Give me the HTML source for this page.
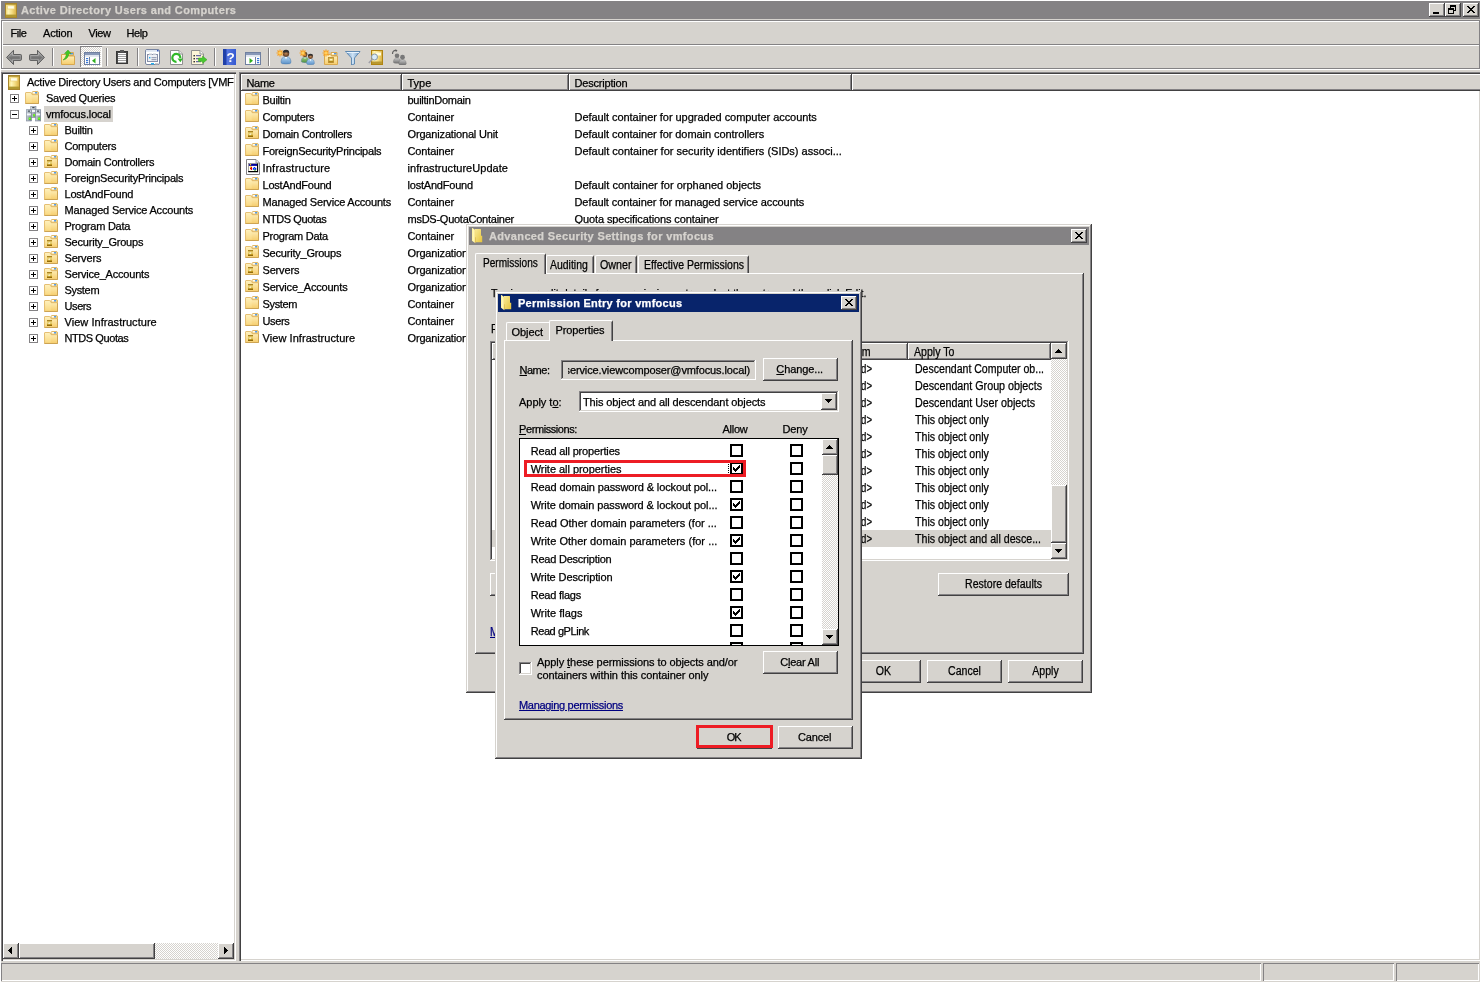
<!DOCTYPE html>
<html><head><meta charset="utf-8"><title>Active Directory Users and Computers</title>
<style>
html,body{margin:0;padding:0;}
body{width:1480px;height:982px;overflow:hidden;background:#d6d3ce;position:relative;font-family:"Liberation Sans",sans-serif;font-size:11px;color:#000;}
div,span,svg{position:absolute;box-sizing:border-box;}
.t{white-space:nowrap;line-height:13px;font-size:11px;-webkit-text-stroke:0.25px currentColor;}
.b{font-weight:bold;}
.ms{font-size:12px;line-height:14px;transform:scaleX(.88);transform-origin:0 0;}
.raised{background:#d6d3ce;box-shadow:inset -1px -1px #424142,inset 1px 1px #fff,inset -2px -2px #848284,inset 2px 2px #d6d3ce;}
.sunken{background:#fff;box-shadow:inset -1px -1px #fff,inset 1px 1px #848284,inset -2px -2px #d6d3ce,inset 2px 2px #424142;}
.win{background:#d6d3ce;box-shadow:inset -1px -1px #424142,inset 1px 1px #d6d3ce,inset -2px -2px #848284,inset 2px 2px #fff;}
.hdr{background:#d6d3ce;box-shadow:inset -1px -1px #424142,inset 1px 1px #fff,inset -2px -2px #848284;}
.tabpage{background:#d6d3ce;box-shadow:inset -1px -1px #424142,inset 1px 1px #fff,inset -2px -2px #848284;}
.tab{background:#d6d3ce;border-top:1px solid #fff;border-left:1px solid #fff;border-right:1px solid #424142;border-radius:2px 2px 0 0;}
.tab:after{content:"";position:absolute;right:0;top:1px;bottom:0;width:1px;background:#848284;}
.chk{background:repeating-conic-gradient(#fff 0% 25%,#d6d3ce 0% 50%) 0 0/2px 2px;}
.cb{background:#fff;border:2px solid #000;}
.u{text-decoration:underline;}
</style></head><body><div id="root" style="left:0;top:0;width:1480px;height:982px;will-change:transform">

<svg width="0" height="0" style="left:0;top:0"><defs>
<linearGradient id="gF" x1="0" y1="0" x2="0" y2="1"><stop offset="0" stop-color="#fff3c4"/><stop offset="1" stop-color="#f6cd6c"/></linearGradient>
<linearGradient id="gB" x1="0" y1="0" x2="1" y2="0"><stop offset="0" stop-color="#f0d468"/><stop offset=".25" stop-color="#fff6b8"/><stop offset=".6" stop-color="#f4dc80"/><stop offset="1" stop-color="#d8ae40"/></linearGradient>
<linearGradient id="gS" x1="0" y1="0" x2="1" y2="0"><stop offset="0" stop-color="#c8d0d8"/><stop offset="1" stop-color="#7e8896"/></linearGradient>
<linearGradient id="gA" x1="0" y1="0" x2="0" y2="1"><stop offset="0" stop-color="#b8b8b8"/><stop offset=".55" stop-color="#707070"/><stop offset="1" stop-color="#a8a8a8"/></linearGradient>
<linearGradient id="gH" x1="0" y1="0" x2="1" y2="0"><stop offset="0" stop-color="#2040a8"/><stop offset=".25" stop-color="#2848c0"/><stop offset=".3" stop-color="#5878e0"/><stop offset="1" stop-color="#3458d0"/></linearGradient>
<linearGradient id="gFu" x1="0" y1="0" x2="1" y2="0"><stop offset="0" stop-color="#5f8fc0"/><stop offset=".5" stop-color="#cfe4f6"/><stop offset="1" stop-color="#5f8fc0"/></linearGradient>
<linearGradient id="gU" x1="0" y1="0" x2="0" y2="1"><stop offset="0" stop-color="#b4d8f4"/><stop offset="1" stop-color="#5a90c8"/></linearGradient>
<linearGradient id="gG" x1="0" y1="0" x2="0" y2="1"><stop offset="0" stop-color="#a0d088"/><stop offset="1" stop-color="#509040"/></linearGradient>
<linearGradient id="gGr" x1="0" y1="0" x2="0" y2="1"><stop offset="0" stop-color="#c8c8c8"/><stop offset="1" stop-color="#707070"/></linearGradient>
<linearGradient id="gOU" x1="0" y1="0" x2="0" y2="1"><stop offset="0" stop-color="#c8a030"/><stop offset=".5" stop-color="#ecd880"/><stop offset=".75" stop-color="#c09820"/><stop offset="1" stop-color="#7a5200"/></linearGradient>
<radialGradient id="gHd"><stop offset="0" stop-color="#c08858"/><stop offset="1" stop-color="#5a3820"/></radialGradient>
</defs></svg>
<div class="" style="left:0px;top:0px;width:1480px;height:1px;background:#fff"></div>
<div class="" style="left:0px;top:0px;width:1px;height:982px;background:#fff"></div>
<div class="" style="left:1px;top:1px;width:1479px;height:18px;background:#848284"></div>
<svg style="left:5px;top:3px" width="16" height="16" viewBox="0 0 16 16"><rect x=".5" y=".5" width="11" height="14" fill="url(#gB)" stroke="#a8862c"/>
<rect x="1" y="11.6" width="10" height="2.4" fill="#b09830"/>
<rect x="1" y="1" width="10" height=".9" fill="#b89c38"/>
<rect x="2.6" y="2.8" width="6.6" height="3.2" fill="#fffee6" stroke="#ecd27a" stroke-width=".7"/></svg>
<span class="t b" style="left:21px;top:4px;letter-spacing:0.377px;color:#d6d3ce;">Active Directory Users and Computers</span>
<div class="raised" style="left:1429px;top:3px;width:16px;height:14px;"></div>
<svg style="left:1433px;top:12px" width="6" height="2" viewBox="0 0 6 2" shape-rendering="crispEdges"><path d="M0 0h6v1h-6zM0 1h6v1h-6z" fill="#000"/></svg>
<div class="raised" style="left:1445px;top:3px;width:16px;height:14px;"></div>
<svg style="left:1448px;top:5px" width="8" height="9" viewBox="0 0 8 9" shape-rendering="crispEdges"><path d="M2 0h6v1h-6zM2 1h6v1h-6zM2 2h1v1h-1zM7 2h1v1h-1zM0 3h6v1h-6zM7 3h1v1h-1zM0 4h6v1h-6zM7 4h1v1h-1zM0 5h1v1h-1zM5 5h3v1h-3zM0 6h1v1h-1zM5 6h1v1h-1zM0 7h1v1h-1zM5 7h1v1h-1zM0 8h6v1h-6z" fill="#000"/></svg>
<div class="raised" style="left:1463px;top:3px;width:16px;height:14px;"></div>
<svg style="left:1467px;top:6px" width="8" height="7" viewBox="0 0 8 7" shape-rendering="crispEdges"><path d="M0 0h2v1h-2zM6 0h2v1h-2zM1 1h2v1h-2zM5 1h2v1h-2zM2 2h4v1h-4zM3 3h2v1h-2zM2 4h4v1h-4zM1 5h2v1h-2zM5 5h2v1h-2zM0 6h2v1h-2zM6 6h2v1h-2z" fill="#000"/></svg>
<div class="" style="left:1px;top:20px;width:1479px;height:1px;background:#848284"></div>
<div class="" style="left:1px;top:20px;width:1px;height:49px;background:#848284"></div>
<div class="" style="left:1479px;top:20px;width:1px;height:49px;background:#848284"></div>
<div class="" style="left:2px;top:21px;width:1477px;height:1px;background:#fff"></div>
<div class="" style="left:2px;top:21px;width:1px;height:47px;background:#fff"></div>
<span class="t" style="left:10.5px;top:27px;letter-spacing:-0.455px;">File</span>
<span class="t" style="left:43px;top:27px;letter-spacing:-0.199px;">Action</span>
<span class="t" style="left:88.5px;top:27px;letter-spacing:-0.435px;">View</span>
<span class="t" style="left:126.5px;top:27px;letter-spacing:-0.456px;">Help</span>
<div class="" style="left:3px;top:44px;width:1476px;height:1px;background:#848284"></div>
<div class="" style="left:3px;top:45px;width:1476px;height:1px;background:#fff"></div>
<div class="" style="left:1px;top:68px;width:1479px;height:1px;background:#848284"></div>
<div class="" style="left:1px;top:69px;width:1479px;height:1px;background:#fff"></div>
<div class="" style="left:52px;top:48px;width:1px;height:18px;background:#848284"></div>
<div class="" style="left:53px;top:48px;width:1px;height:18px;background:#fff"></div>
<div class="" style="left:106px;top:48px;width:1px;height:18px;background:#848284"></div>
<div class="" style="left:107px;top:48px;width:1px;height:18px;background:#fff"></div>
<div class="" style="left:137px;top:48px;width:1px;height:18px;background:#848284"></div>
<div class="" style="left:138px;top:48px;width:1px;height:18px;background:#fff"></div>
<div class="" style="left:214px;top:48px;width:1px;height:18px;background:#848284"></div>
<div class="" style="left:215px;top:48px;width:1px;height:18px;background:#fff"></div>
<div class="" style="left:268px;top:48px;width:1px;height:18px;background:#848284"></div>
<div class="" style="left:269px;top:48px;width:1px;height:18px;background:#fff"></div>
<svg style="left:6px;top:49px" width="16" height="16" viewBox="0 0 16 16"><path d="M.6 8.4L7.5 1.3V5.5H14.6Q15.4 5.5 15.4 6.3V10.6Q15.4 11.4 14.6 11.4H7.5V15.5Z" fill="url(#gA)" stroke="#5c5c5c" stroke-width="1"/><path d="M2 8.4L6.6 3.7V6.5H14.3V10.4H6.6V13.1Z" fill="none" stroke="#d0d0d0" stroke-width=".5" opacity=".8"/></svg>
<svg style="left:29px;top:49px" width="16" height="16" viewBox="0 0 16 16"><path d="M15.4 8.4L8.5 1.3V5.5H1.4Q.6 5.5 .6 6.3V10.6Q.6 11.4 1.4 11.4H8.5V15.5Z" fill="url(#gA)" stroke="#5c5c5c" stroke-width="1"/><path d="M14 8.4L9.4 3.7V6.5H1.7V10.4H9.4V13.1Z" fill="none" stroke="#d0d0d0" stroke-width=".5" opacity=".8"/></svg>
<svg style="left:60px;top:49px" width="16" height="16" viewBox="0 0 16 16"><path d="M8 3.5h5.5v3h-5.5z" fill="#f4d282" stroke="#d8a850"/><rect x="10" y="4" width="3" height="1.4" fill="#4a98f0"/>
<path d="M1.5 5.5h6l1 1.5h6v8.5h-13z" fill="url(#gF)" stroke="#d8a850"/>
<path d="M3 11C4.5 10 6 8 6.5 4.5H4.5L8 1L11 4.5H9C8.5 8 6.5 10.5 3 11Z" fill="#40c820" stroke="#30a018" stroke-width=".5"/></svg>
<div class="chk" style="left:80px;top:46px;width:22px;height:21px;box-shadow:inset 1px 1px #848284,inset -1px -1px #fff"></div>
<svg style="left:84px;top:51px" width="16" height="16" viewBox="0 0 16 16"><rect x=".5" y="1.5" width="15" height="12" fill="#fff" stroke="#7080a0"/><rect x="1" y="2" width="14" height="2.2" fill="#8898b8"/><rect x="1" y="4.2" width="14" height="1.6" fill="#dde4ee"/>
<path d="M5.5 6v7.5" stroke="#7080a0"/><rect x="2" y="7" width="2.2" height="1.2" fill="#3878d8"/><rect x="2" y="9" width="2.2" height="1.2" fill="#3878d8"/><rect x="2" y="11" width="2.2" height="1.2" fill="#3878d8"/>
<path d="M11.5 7v5.5L8 9.7z" fill="#30b020"/></svg>
<svg style="left:114px;top:49px" width="16" height="16" viewBox="0 0 16 16"><rect x="2.5" y="2.5" width="11" height="12" fill="#484848" stroke="#383838"/><rect x="6" y="1" width="4" height="2.4" fill="#585858"/>
<rect x="4" y="4" width="8" height="9.5" fill="#fff"/><path d="M4 5.5h8M4 7.5h8M4 9.5h8M4 11.5h8" stroke="#a0a0a0" stroke-width="1"/></svg>
<svg style="left:145px;top:49px" width="16" height="16" viewBox="0 0 16 16"><rect x=".5" y=".5" width="14" height="15" rx="1.5" fill="#fff" stroke="#7884a0"/><rect x="1" y="1" width="13" height="1.8" fill="#dfe6f2"/><rect x="12" y="1" width="1.6" height="1.4" fill="#3858b8"/>
<rect x="2.5" y="5.5" width="10" height="7" fill="#eef0f6" stroke="#8890a8"/><rect x="4" y="4.5" width="3" height="1.4" fill="#c8ccd8"/><rect x="8" y="4.5" width="3" height="1.4" fill="#c8ccd8"/>
<rect x="4" y="8" width="1.4" height="1.4" fill="#20b0f0"/><path d="M6.5 8.7h5M6.5 10.7h5" stroke="#8890a8"/>
<rect x="6" y="14" width="3" height="1.4" fill="#20b0f0"/><rect x="10" y="14" width="3" height="1.4" fill="#c8c8c8"/></svg>
<svg style="left:168px;top:49px" width="16" height="16" viewBox="0 0 16 16"><path d="M2.5 1.5H11L14.5 5V15.5H2.5Z" fill="#fff" stroke="#909090"/><path d="M11 1.5V5H14.5" fill="#e8e8e8" stroke="#909090"/>
<path d="M12.3 9A4 4 0 1 0 8.5 12.8" fill="none" stroke="#30b828" stroke-width="2.2"/><path d="M9.5 9.5H15L12.3 13.2Z" fill="#30b828"/></svg>
<svg style="left:191px;top:49px" width="16" height="16" viewBox="0 0 16 16"><path d="M.5 1.5H9L12.5 5V15.5H.5Z" fill="#fdf6d8" stroke="#909090"/><path d="M9 1.5V5H12.5" fill="#fff" stroke="#909090"/>
<rect x="2.5" y="6" width="1.4" height="1.4" fill="#202020"/><rect x="2.5" y="9" width="1.4" height="1.4" fill="#202020"/><rect x="2.5" y="12" width="1.4" height="1.4" fill="#202020"/>
<path d="M5 6.7h5M5 9.7h3M5 12.7h5" stroke="#6868a8" stroke-width="1.2"/>
<path d="M7.5 9H11.5V7L16 10.7L11.5 14.4V12.4H7.5Z" fill="#48c830" stroke="#38a020" stroke-width=".5"/></svg>
<svg style="left:222px;top:49px" width="16" height="16" viewBox="0 0 16 16"><rect x="1" y="0" width="13" height="16" fill="url(#gH)"/><rect x="1" y="0" width="3" height="16" fill="#2040a8"/>
<text x="8.6" y="13" font-family="Liberation Sans" font-weight="bold" font-size="13.5" fill="#fff" text-anchor="middle">?</text></svg>
<svg style="left:245px;top:51px" width="16" height="16" viewBox="0 0 16 16"><rect x=".5" y="1.5" width="15" height="12" fill="#fff" stroke="#7080a0"/><rect x="1" y="2" width="14" height="2.2" fill="#8898b8"/><rect x="1" y="4.2" width="14" height="1.6" fill="#dde4ee"/>
<path d="M10.5 6v7.5" stroke="#7080a0"/><rect x="12" y="7" width="2.2" height="1.2" fill="#3878d8"/><rect x="12" y="9" width="2.2" height="1.2" fill="#3878d8"/><rect x="12" y="11" width="2.2" height="1.2" fill="#3878d8"/>
<path d="M4.5 7v5.5L8 9.7z" fill="#30b020"/></svg>
<svg style="left:276px;top:49px" width="16" height="16" viewBox="0 0 16 16"><g transform="translate(10,5.5) scale(1)"><path d="M-5 8Q-5 2 0 2Q5 2 5 8Q5 9.5 0 9.5Q-5 9.5 -5 8Z" fill="url(#gU)" stroke="#4878a8" stroke-width=".5"/><path d="M-1 2.5L0 5L1 2.5Z" fill="#fff"/><circle cx="0" cy="-1" r="3.2" fill="url(#gHd)"/><path d="M-3.2 -1.5A3.2 3.2 0 0 1 3.2 -1.5Q1 -3 -3.2 -1.5Z" fill="#303030"/></g><g stroke="#f8a020" stroke-width="1.2"><path d="M4 .5v7M.5 4h7M1.5 1.5l5 5M6.5 1.5l-5 5"/></g><circle cx="4" cy="4" r="1.6" fill="#ffd060"/></svg>
<svg style="left:299px;top:49px" width="16" height="16" viewBox="0 0 16 16"><g transform="translate(6,6.5) scale(0.75)"><path d="M-5 8Q-5 2 0 2Q5 2 5 8Q5 9.5 0 9.5Q-5 9.5 -5 8Z" fill="url(#gG)" stroke="#4878a8" stroke-width=".5"/><path d="M-1 2.5L0 5L1 2.5Z" fill="#fff"/><circle cx="0" cy="-1" r="3.2" fill="url(#gHd)"/><path d="M-3.2 -1.5A3.2 3.2 0 0 1 3.2 -1.5Q1 -3 -3.2 -1.5Z" fill="#303030"/></g><g transform="translate(11.5,8.3) scale(0.78)"><path d="M-5 8Q-5 2 0 2Q5 2 5 8Q5 9.5 0 9.5Q-5 9.5 -5 8Z" fill="url(#gU)" stroke="#4878a8" stroke-width=".5"/><path d="M-1 2.5L0 5L1 2.5Z" fill="#fff"/><circle cx="0" cy="-1" r="3.2" fill="url(#gHd)"/><path d="M-3.2 -1.5A3.2 3.2 0 0 1 3.2 -1.5Q1 -3 -3.2 -1.5Z" fill="#303030"/></g><g stroke="#f8a020" stroke-width="1.2"><path d="M4 .5v7M.5 4h7M1.5 1.5l5 5M6.5 1.5l-5 5"/></g><circle cx="4" cy="4" r="1.6" fill="#ffd060"/></svg>
<svg style="left:322px;top:49px" width="16" height="16" viewBox="0 0 16 16"><path d="M9 3.5h6v3h-6z" fill="#f4d282" stroke="#d8a850"/><rect x="12" y="4" width="2.4" height="1.4" fill="#4a98f0"/><rect x="10" y="4" width="2" height="1.4" fill="#fff"/>
<path d="M2.5 5.5h6l1 1.5h6v8.5h-13z" fill="url(#gF)" stroke="#d8a850"/>
<rect x="6.5" y="8.5" width="5" height="5" fill="url(#gOU)" stroke="#b88a30" stroke-width=".8"/><rect x="8" y="10" width="2.2" height="1.4" fill="#fff4c8"/><g stroke="#f8a020" stroke-width="1.2"><path d="M4 .5v7M.5 4h7M1.5 1.5l5 5M6.5 1.5l-5 5"/></g><circle cx="4" cy="4" r="1.6" fill="#ffd060"/></svg>
<svg style="left:345px;top:49px" width="16" height="16" viewBox="0 0 16 16"><path d="M.5 2.5H15L9.5 9V15L6.5 16V9Z" fill="url(#gFu)" stroke="#4878a8" stroke-width=".8"/><path d="M1.5 3.5H14" stroke="#e8f4ff"/></svg>
<svg style="left:368px;top:49px" width="16" height="16" viewBox="0 0 16 16"><rect x="3.5" y="1.5" width="11" height="14" fill="url(#gB)" stroke="#b08410"/><rect x="4" y="12.5" width="10" height="2.5" fill="#b89830"/><rect x="8" y="3.5" width="5" height="3" fill="#fffde0"/>
<circle cx="6.5" cy="8" r="3" fill="#d8ecf8" stroke="#8898a8"/><path d="M4.3 10.3L.8 14" stroke="#a0a0a8" stroke-width="1.6"/></svg>
<svg style="left:391px;top:49px" width="16" height="16" viewBox="0 0 16 16"><g transform="translate(6,7.5) scale(0.72)"><path d="M-5 8Q-5 2 0 2Q5 2 5 8Q5 9.5 0 9.5Q-5 9.5 -5 8Z" fill="url(#gGr)" stroke="#707070" stroke-width=".5"/><circle cx="0" cy="-1" r="3.2" fill="#787878"/></g><g transform="translate(11.5,9) scale(0.75)"><path d="M-5 8Q-5 2 0 2Q5 2 5 8Q5 9.5 0 9.5Q-5 9.5 -5 8Z" fill="url(#gGr)" stroke="#707070" stroke-width=".5"/><circle cx="0" cy="-1" r="3.2" fill="#787878"/></g><path d="M1.5 5Q1.5 1 5.5 1.5" fill="none" stroke="#606060" stroke-width="1.2"/><path d="M4.5 .2L6.5 1.6L4.8 3.2Z" fill="#606060"/></svg>
<div class="" style="left:1px;top:72px;width:235px;height:889px;background:#fff;box-shadow:inset 1px 1px #848284,inset 2px 2px #424142,inset -1px -1px #fff,inset -2px -2px #d6d3ce;"></div>
<svg style="left:8px;top:75px" width="16" height="16" viewBox="0 0 16 16"><rect x=".5" y=".5" width="11" height="14" fill="url(#gB)" stroke="#a8862c"/>
<rect x="1" y="11.6" width="10" height="2.4" fill="#b09830"/>
<rect x="1" y="1" width="10" height=".9" fill="#b89c38"/>
<rect x="2.6" y="2.8" width="6.6" height="3.2" fill="#fffee6" stroke="#ecd27a" stroke-width=".7"/></svg>
<div style="left:3px;top:74px;width:231px;height:16px;overflow:hidden">
<span class="t" style="left:24px;top:2px;letter-spacing:-0.239px;">Active Directory Users and Computers [VMFOCUS]</span>
</div>
<div class="" style="left:10px;top:94px;width:9px;height:9px;border:1px solid #848284;background:#fff"></div>
<div class="" style="left:12px;top:98px;width:5px;height:1px;background:#000"></div>
<div class="" style="left:14px;top:96px;width:1px;height:5px;background:#000"></div>
<svg style="left:25px;top:90px" width="16" height="16" viewBox="0 0 16 16"><path d="M7 4.5V2.2L7.7 1.5H12.8L13.5 2.2V5Z" fill="#f6d88c" stroke="#dcb25e" stroke-width=".9"/>
<rect x="7.8" y="2.1" width="2.4" height="1.3" fill="#fff"/><rect x="10" y="2.1" width="2.2" height="1.3" rx=".5" fill="#4a98f0"/>
<path d="M.5 3Q.5 2.5 1 2.5H5.7L7.2 4.7H13.5V13.5H.5Z" fill="url(#gF)" stroke="#e2b968" stroke-width=".9"/>
<path d="M1.4 3.4H5.3L6.8 5.6V12.6H1.4Z" fill="#ffeeb0" opacity=".3"/>
<path d="M.5 13.5H13.5V5.2" fill="none" stroke="#c9a050" stroke-width=".9"/></svg>
<span class="t" style="left:46px;top:92px;letter-spacing:-0.274px;">Saved Queries</span>
<div class="" style="left:10px;top:110px;width:9px;height:9px;border:1px solid #848284;background:#fff"></div>
<div class="" style="left:12px;top:114px;width:5px;height:1px;background:#000"></div>
<svg style="left:26px;top:106px" width="16" height="16" viewBox="0 0 16 16"><g transform="translate(4.5,0)"><rect x=".3" y=".3" width="5.2" height="11.3" fill="url(#gS)" stroke="#7c8898" stroke-width=".6"/>
<rect x=".9" y=".8" width="4" height="1.9" fill="#dfe8f2"/><rect x="1.7" y="1.2" width="2.4" height="1" fill="#1c242c"/>
<rect x=".9" y="4" width="4" height="2" fill="#f2f6fa"/>
<rect x="2.7" y="8.1" width="2.3" height="2.4" fill="#40e418"/><rect x="3.2" y="8.4" width="1.2" height="1" fill="#b8f840"/></g><g transform="translate(0,3.4)"><rect x=".3" y=".3" width="5.2" height="11.3" fill="url(#gS)" stroke="#7c8898" stroke-width=".6"/>
<rect x=".9" y=".8" width="4" height="1.9" fill="#dfe8f2"/><rect x="1.7" y="1.2" width="2.4" height="1" fill="#1c242c"/>
<rect x=".9" y="4" width="4" height="2" fill="#f2f6fa"/>
<rect x="2.7" y="8.1" width="2.3" height="2.4" fill="#40e418"/><rect x="3.2" y="8.4" width="1.2" height="1" fill="#b8f840"/></g><g transform="translate(9.2,3.4)"><rect x=".3" y=".3" width="5.2" height="11.3" fill="url(#gS)" stroke="#7c8898" stroke-width=".6"/>
<rect x=".9" y=".8" width="4" height="1.9" fill="#dfe8f2"/><rect x="1.7" y="1.2" width="2.4" height="1" fill="#1c242c"/>
<rect x=".9" y="4" width="4" height="2" fill="#f2f6fa"/>
<rect x="2.7" y="8.1" width="2.3" height="2.4" fill="#40e418"/><rect x="3.2" y="8.4" width="1.2" height="1" fill="#b8f840"/></g></svg>
<div class="" style="left:44px;top:106px;width:69px;height:16px;background:#d6d3ce"></div>
<span class="t" style="left:46px;top:108px;letter-spacing:-0.147px;">vmfocus.local</span>
<div class="" style="left:29px;top:126px;width:9px;height:9px;border:1px solid #848284;background:#fff"></div>
<div class="" style="left:31px;top:130px;width:5px;height:1px;background:#000"></div>
<div class="" style="left:33px;top:128px;width:1px;height:5px;background:#000"></div>
<svg style="left:44px;top:122px" width="16" height="16" viewBox="0 0 16 16"><path d="M7 4.5V2.2L7.7 1.5H12.8L13.5 2.2V5Z" fill="#f6d88c" stroke="#dcb25e" stroke-width=".9"/>
<rect x="7.8" y="2.1" width="2.4" height="1.3" fill="#fff"/><rect x="10" y="2.1" width="2.2" height="1.3" rx=".5" fill="#4a98f0"/>
<path d="M.5 3Q.5 2.5 1 2.5H5.7L7.2 4.7H13.5V13.5H.5Z" fill="url(#gF)" stroke="#e2b968" stroke-width=".9"/>
<path d="M1.4 3.4H5.3L6.8 5.6V12.6H1.4Z" fill="#ffeeb0" opacity=".3"/>
<path d="M.5 13.5H13.5V5.2" fill="none" stroke="#c9a050" stroke-width=".9"/></svg>
<span class="t" style="left:64.5px;top:124px;letter-spacing:-0.281px;">Builtin</span>
<div class="" style="left:29px;top:142px;width:9px;height:9px;border:1px solid #848284;background:#fff"></div>
<div class="" style="left:31px;top:146px;width:5px;height:1px;background:#000"></div>
<div class="" style="left:33px;top:144px;width:1px;height:5px;background:#000"></div>
<svg style="left:44px;top:138px" width="16" height="16" viewBox="0 0 16 16"><path d="M7 4.5V2.2L7.7 1.5H12.8L13.5 2.2V5Z" fill="#f6d88c" stroke="#dcb25e" stroke-width=".9"/>
<rect x="7.8" y="2.1" width="2.4" height="1.3" fill="#fff"/><rect x="10" y="2.1" width="2.2" height="1.3" rx=".5" fill="#4a98f0"/>
<path d="M.5 3Q.5 2.5 1 2.5H5.7L7.2 4.7H13.5V13.5H.5Z" fill="url(#gF)" stroke="#e2b968" stroke-width=".9"/>
<path d="M1.4 3.4H5.3L6.8 5.6V12.6H1.4Z" fill="#ffeeb0" opacity=".3"/>
<path d="M.5 13.5H13.5V5.2" fill="none" stroke="#c9a050" stroke-width=".9"/></svg>
<span class="t" style="left:64.5px;top:140px;letter-spacing:-0.229px;">Computers</span>
<div class="" style="left:29px;top:158px;width:9px;height:9px;border:1px solid #848284;background:#fff"></div>
<div class="" style="left:31px;top:162px;width:5px;height:1px;background:#000"></div>
<div class="" style="left:33px;top:160px;width:1px;height:5px;background:#000"></div>
<svg style="left:44px;top:154px" width="16" height="16" viewBox="0 0 16 16"><path d="M7 4.5V2.2L7.7 1.5H12.8L13.5 2.2V5Z" fill="#f6d88c" stroke="#dcb25e" stroke-width=".9"/>
<rect x="7.8" y="2.1" width="2.4" height="1.3" fill="#fff"/><rect x="10" y="2.1" width="2.2" height="1.3" rx=".5" fill="#4a98f0"/>
<path d="M.5 3Q.5 2.5 1 2.5H5.7L7.2 4.7H13.5V13.5H.5Z" fill="url(#gF)" stroke="#e2b968" stroke-width=".9"/>
<path d="M1.4 3.4H5.3L6.8 5.6V12.6H1.4Z" fill="#ffeeb0" opacity=".3"/>
<path d="M.5 13.5H13.5V5.2" fill="none" stroke="#c9a050" stroke-width=".9"/><rect x="3" y="6" width="5" height="6" fill="url(#gOU)"/>
<rect x="3" y="6" width="5" height=".8" fill="#a07a1c"/>
<path d="M4.2 9.6L5.6 8.2L6.4 9L5 10.4Z" fill="#fffbe0" opacity=".9"/></svg>
<span class="t" style="left:64.5px;top:156px;letter-spacing:-0.245px;">Domain Controllers</span>
<div class="" style="left:29px;top:174px;width:9px;height:9px;border:1px solid #848284;background:#fff"></div>
<div class="" style="left:31px;top:178px;width:5px;height:1px;background:#000"></div>
<div class="" style="left:33px;top:176px;width:1px;height:5px;background:#000"></div>
<svg style="left:44px;top:170px" width="16" height="16" viewBox="0 0 16 16"><path d="M7 4.5V2.2L7.7 1.5H12.8L13.5 2.2V5Z" fill="#f6d88c" stroke="#dcb25e" stroke-width=".9"/>
<rect x="7.8" y="2.1" width="2.4" height="1.3" fill="#fff"/><rect x="10" y="2.1" width="2.2" height="1.3" rx=".5" fill="#4a98f0"/>
<path d="M.5 3Q.5 2.5 1 2.5H5.7L7.2 4.7H13.5V13.5H.5Z" fill="url(#gF)" stroke="#e2b968" stroke-width=".9"/>
<path d="M1.4 3.4H5.3L6.8 5.6V12.6H1.4Z" fill="#ffeeb0" opacity=".3"/>
<path d="M.5 13.5H13.5V5.2" fill="none" stroke="#c9a050" stroke-width=".9"/></svg>
<span class="t" style="left:64.5px;top:172px;letter-spacing:-0.240px;">ForeignSecurityPrincipals</span>
<div class="" style="left:29px;top:190px;width:9px;height:9px;border:1px solid #848284;background:#fff"></div>
<div class="" style="left:31px;top:194px;width:5px;height:1px;background:#000"></div>
<div class="" style="left:33px;top:192px;width:1px;height:5px;background:#000"></div>
<svg style="left:44px;top:186px" width="16" height="16" viewBox="0 0 16 16"><path d="M7 4.5V2.2L7.7 1.5H12.8L13.5 2.2V5Z" fill="#f6d88c" stroke="#dcb25e" stroke-width=".9"/>
<rect x="7.8" y="2.1" width="2.4" height="1.3" fill="#fff"/><rect x="10" y="2.1" width="2.2" height="1.3" rx=".5" fill="#4a98f0"/>
<path d="M.5 3Q.5 2.5 1 2.5H5.7L7.2 4.7H13.5V13.5H.5Z" fill="url(#gF)" stroke="#e2b968" stroke-width=".9"/>
<path d="M1.4 3.4H5.3L6.8 5.6V12.6H1.4Z" fill="#ffeeb0" opacity=".3"/>
<path d="M.5 13.5H13.5V5.2" fill="none" stroke="#c9a050" stroke-width=".9"/></svg>
<span class="t" style="left:64.5px;top:188px;letter-spacing:-0.240px;">LostAndFound</span>
<div class="" style="left:29px;top:206px;width:9px;height:9px;border:1px solid #848284;background:#fff"></div>
<div class="" style="left:31px;top:210px;width:5px;height:1px;background:#000"></div>
<div class="" style="left:33px;top:208px;width:1px;height:5px;background:#000"></div>
<svg style="left:44px;top:202px" width="16" height="16" viewBox="0 0 16 16"><path d="M7 4.5V2.2L7.7 1.5H12.8L13.5 2.2V5Z" fill="#f6d88c" stroke="#dcb25e" stroke-width=".9"/>
<rect x="7.8" y="2.1" width="2.4" height="1.3" fill="#fff"/><rect x="10" y="2.1" width="2.2" height="1.3" rx=".5" fill="#4a98f0"/>
<path d="M.5 3Q.5 2.5 1 2.5H5.7L7.2 4.7H13.5V13.5H.5Z" fill="url(#gF)" stroke="#e2b968" stroke-width=".9"/>
<path d="M1.4 3.4H5.3L6.8 5.6V12.6H1.4Z" fill="#ffeeb0" opacity=".3"/>
<path d="M.5 13.5H13.5V5.2" fill="none" stroke="#c9a050" stroke-width=".9"/></svg>
<span class="t" style="left:64.5px;top:204px;letter-spacing:-0.193px;">Managed Service Accounts</span>
<div class="" style="left:29px;top:222px;width:9px;height:9px;border:1px solid #848284;background:#fff"></div>
<div class="" style="left:31px;top:226px;width:5px;height:1px;background:#000"></div>
<div class="" style="left:33px;top:224px;width:1px;height:5px;background:#000"></div>
<svg style="left:44px;top:218px" width="16" height="16" viewBox="0 0 16 16"><path d="M7 4.5V2.2L7.7 1.5H12.8L13.5 2.2V5Z" fill="#f6d88c" stroke="#dcb25e" stroke-width=".9"/>
<rect x="7.8" y="2.1" width="2.4" height="1.3" fill="#fff"/><rect x="10" y="2.1" width="2.2" height="1.3" rx=".5" fill="#4a98f0"/>
<path d="M.5 3Q.5 2.5 1 2.5H5.7L7.2 4.7H13.5V13.5H.5Z" fill="url(#gF)" stroke="#e2b968" stroke-width=".9"/>
<path d="M1.4 3.4H5.3L6.8 5.6V12.6H1.4Z" fill="#ffeeb0" opacity=".3"/>
<path d="M.5 13.5H13.5V5.2" fill="none" stroke="#c9a050" stroke-width=".9"/></svg>
<span class="t" style="left:64.5px;top:220px;letter-spacing:-0.229px;">Program Data</span>
<div class="" style="left:29px;top:238px;width:9px;height:9px;border:1px solid #848284;background:#fff"></div>
<div class="" style="left:31px;top:242px;width:5px;height:1px;background:#000"></div>
<div class="" style="left:33px;top:240px;width:1px;height:5px;background:#000"></div>
<svg style="left:44px;top:234px" width="16" height="16" viewBox="0 0 16 16"><path d="M7 4.5V2.2L7.7 1.5H12.8L13.5 2.2V5Z" fill="#f6d88c" stroke="#dcb25e" stroke-width=".9"/>
<rect x="7.8" y="2.1" width="2.4" height="1.3" fill="#fff"/><rect x="10" y="2.1" width="2.2" height="1.3" rx=".5" fill="#4a98f0"/>
<path d="M.5 3Q.5 2.5 1 2.5H5.7L7.2 4.7H13.5V13.5H.5Z" fill="url(#gF)" stroke="#e2b968" stroke-width=".9"/>
<path d="M1.4 3.4H5.3L6.8 5.6V12.6H1.4Z" fill="#ffeeb0" opacity=".3"/>
<path d="M.5 13.5H13.5V5.2" fill="none" stroke="#c9a050" stroke-width=".9"/><rect x="3" y="6" width="5" height="6" fill="url(#gOU)"/>
<rect x="3" y="6" width="5" height=".8" fill="#a07a1c"/>
<path d="M4.2 9.6L5.6 8.2L6.4 9L5 10.4Z" fill="#fffbe0" opacity=".9"/></svg>
<span class="t" style="left:64.5px;top:236px;letter-spacing:-0.215px;">Security_Groups</span>
<div class="" style="left:29px;top:254px;width:9px;height:9px;border:1px solid #848284;background:#fff"></div>
<div class="" style="left:31px;top:258px;width:5px;height:1px;background:#000"></div>
<div class="" style="left:33px;top:256px;width:1px;height:5px;background:#000"></div>
<svg style="left:44px;top:250px" width="16" height="16" viewBox="0 0 16 16"><path d="M7 4.5V2.2L7.7 1.5H12.8L13.5 2.2V5Z" fill="#f6d88c" stroke="#dcb25e" stroke-width=".9"/>
<rect x="7.8" y="2.1" width="2.4" height="1.3" fill="#fff"/><rect x="10" y="2.1" width="2.2" height="1.3" rx=".5" fill="#4a98f0"/>
<path d="M.5 3Q.5 2.5 1 2.5H5.7L7.2 4.7H13.5V13.5H.5Z" fill="url(#gF)" stroke="#e2b968" stroke-width=".9"/>
<path d="M1.4 3.4H5.3L6.8 5.6V12.6H1.4Z" fill="#ffeeb0" opacity=".3"/>
<path d="M.5 13.5H13.5V5.2" fill="none" stroke="#c9a050" stroke-width=".9"/><rect x="3" y="6" width="5" height="6" fill="url(#gOU)"/>
<rect x="3" y="6" width="5" height=".8" fill="#a07a1c"/>
<path d="M4.2 9.6L5.6 8.2L6.4 9L5 10.4Z" fill="#fffbe0" opacity=".9"/></svg>
<span class="t" style="left:64.5px;top:252px;letter-spacing:-0.165px;">Servers</span>
<div class="" style="left:29px;top:270px;width:9px;height:9px;border:1px solid #848284;background:#fff"></div>
<div class="" style="left:31px;top:274px;width:5px;height:1px;background:#000"></div>
<div class="" style="left:33px;top:272px;width:1px;height:5px;background:#000"></div>
<svg style="left:44px;top:266px" width="16" height="16" viewBox="0 0 16 16"><path d="M7 4.5V2.2L7.7 1.5H12.8L13.5 2.2V5Z" fill="#f6d88c" stroke="#dcb25e" stroke-width=".9"/>
<rect x="7.8" y="2.1" width="2.4" height="1.3" fill="#fff"/><rect x="10" y="2.1" width="2.2" height="1.3" rx=".5" fill="#4a98f0"/>
<path d="M.5 3Q.5 2.5 1 2.5H5.7L7.2 4.7H13.5V13.5H.5Z" fill="url(#gF)" stroke="#e2b968" stroke-width=".9"/>
<path d="M1.4 3.4H5.3L6.8 5.6V12.6H1.4Z" fill="#ffeeb0" opacity=".3"/>
<path d="M.5 13.5H13.5V5.2" fill="none" stroke="#c9a050" stroke-width=".9"/><rect x="3" y="6" width="5" height="6" fill="url(#gOU)"/>
<rect x="3" y="6" width="5" height=".8" fill="#a07a1c"/>
<path d="M4.2 9.6L5.6 8.2L6.4 9L5 10.4Z" fill="#fffbe0" opacity=".9"/></svg>
<span class="t" style="left:64.5px;top:268px;letter-spacing:-0.209px;">Service_Accounts</span>
<div class="" style="left:29px;top:286px;width:9px;height:9px;border:1px solid #848284;background:#fff"></div>
<div class="" style="left:31px;top:290px;width:5px;height:1px;background:#000"></div>
<div class="" style="left:33px;top:288px;width:1px;height:5px;background:#000"></div>
<svg style="left:44px;top:282px" width="16" height="16" viewBox="0 0 16 16"><path d="M7 4.5V2.2L7.7 1.5H12.8L13.5 2.2V5Z" fill="#f6d88c" stroke="#dcb25e" stroke-width=".9"/>
<rect x="7.8" y="2.1" width="2.4" height="1.3" fill="#fff"/><rect x="10" y="2.1" width="2.2" height="1.3" rx=".5" fill="#4a98f0"/>
<path d="M.5 3Q.5 2.5 1 2.5H5.7L7.2 4.7H13.5V13.5H.5Z" fill="url(#gF)" stroke="#e2b968" stroke-width=".9"/>
<path d="M1.4 3.4H5.3L6.8 5.6V12.6H1.4Z" fill="#ffeeb0" opacity=".3"/>
<path d="M.5 13.5H13.5V5.2" fill="none" stroke="#c9a050" stroke-width=".9"/></svg>
<span class="t" style="left:64.5px;top:284px;letter-spacing:-0.323px;">System</span>
<div class="" style="left:29px;top:302px;width:9px;height:9px;border:1px solid #848284;background:#fff"></div>
<div class="" style="left:31px;top:306px;width:5px;height:1px;background:#000"></div>
<div class="" style="left:33px;top:304px;width:1px;height:5px;background:#000"></div>
<svg style="left:44px;top:298px" width="16" height="16" viewBox="0 0 16 16"><path d="M7 4.5V2.2L7.7 1.5H12.8L13.5 2.2V5Z" fill="#f6d88c" stroke="#dcb25e" stroke-width=".9"/>
<rect x="7.8" y="2.1" width="2.4" height="1.3" fill="#fff"/><rect x="10" y="2.1" width="2.2" height="1.3" rx=".5" fill="#4a98f0"/>
<path d="M.5 3Q.5 2.5 1 2.5H5.7L7.2 4.7H13.5V13.5H.5Z" fill="url(#gF)" stroke="#e2b968" stroke-width=".9"/>
<path d="M1.4 3.4H5.3L6.8 5.6V12.6H1.4Z" fill="#ffeeb0" opacity=".3"/>
<path d="M.5 13.5H13.5V5.2" fill="none" stroke="#c9a050" stroke-width=".9"/></svg>
<span class="t" style="left:64.5px;top:300px;letter-spacing:-0.404px;">Users</span>
<div class="" style="left:29px;top:318px;width:9px;height:9px;border:1px solid #848284;background:#fff"></div>
<div class="" style="left:31px;top:322px;width:5px;height:1px;background:#000"></div>
<div class="" style="left:33px;top:320px;width:1px;height:5px;background:#000"></div>
<svg style="left:44px;top:314px" width="16" height="16" viewBox="0 0 16 16"><path d="M7 4.5V2.2L7.7 1.5H12.8L13.5 2.2V5Z" fill="#f6d88c" stroke="#dcb25e" stroke-width=".9"/>
<rect x="7.8" y="2.1" width="2.4" height="1.3" fill="#fff"/><rect x="10" y="2.1" width="2.2" height="1.3" rx=".5" fill="#4a98f0"/>
<path d="M.5 3Q.5 2.5 1 2.5H5.7L7.2 4.7H13.5V13.5H.5Z" fill="url(#gF)" stroke="#e2b968" stroke-width=".9"/>
<path d="M1.4 3.4H5.3L6.8 5.6V12.6H1.4Z" fill="#ffeeb0" opacity=".3"/>
<path d="M.5 13.5H13.5V5.2" fill="none" stroke="#c9a050" stroke-width=".9"/><rect x="3" y="6" width="5" height="6" fill="url(#gOU)"/>
<rect x="3" y="6" width="5" height=".8" fill="#a07a1c"/>
<path d="M4.2 9.6L5.6 8.2L6.4 9L5 10.4Z" fill="#fffbe0" opacity=".9"/></svg>
<span class="t" style="left:64.5px;top:316px;letter-spacing:0.040px;">View Infrastructure</span>
<div class="" style="left:29px;top:334px;width:9px;height:9px;border:1px solid #848284;background:#fff"></div>
<div class="" style="left:31px;top:338px;width:5px;height:1px;background:#000"></div>
<div class="" style="left:33px;top:336px;width:1px;height:5px;background:#000"></div>
<svg style="left:44px;top:330px" width="16" height="16" viewBox="0 0 16 16"><path d="M7 4.5V2.2L7.7 1.5H12.8L13.5 2.2V5Z" fill="#f6d88c" stroke="#dcb25e" stroke-width=".9"/>
<rect x="7.8" y="2.1" width="2.4" height="1.3" fill="#fff"/><rect x="10" y="2.1" width="2.2" height="1.3" rx=".5" fill="#4a98f0"/>
<path d="M.5 3Q.5 2.5 1 2.5H5.7L7.2 4.7H13.5V13.5H.5Z" fill="url(#gF)" stroke="#e2b968" stroke-width=".9"/>
<path d="M1.4 3.4H5.3L6.8 5.6V12.6H1.4Z" fill="#ffeeb0" opacity=".3"/>
<path d="M.5 13.5H13.5V5.2" fill="none" stroke="#c9a050" stroke-width=".9"/></svg>
<span class="t" style="left:64.5px;top:332px;letter-spacing:-0.427px;">NTDS Quotas</span>
<div class="chk" style="left:3px;top:943px;width:231px;height:16px;"></div>
<div class="raised" style="left:3px;top:943px;width:16px;height:16px;"></div>
<svg style="left:8px;top:947px" width="4" height="7" viewBox="0 0 4 7" shape-rendering="crispEdges"><path d="M3 0h1v1h-1zM2 1h2v1h-2zM1 2h3v1h-3zM0 3h4v1h-4zM1 4h3v1h-3zM2 5h2v1h-2zM3 6h1v1h-1z" fill="#000"/></svg>
<div class="raised" style="left:19px;top:943px;width:136px;height:16px;"></div>
<div class="raised" style="left:218px;top:943px;width:16px;height:16px;"></div>
<svg style="left:224px;top:947px" width="4" height="7" viewBox="0 0 4 7" shape-rendering="crispEdges"><path d="M0 0h1v1h-1zM0 1h2v1h-2zM0 2h3v1h-3zM0 3h4v1h-4zM0 4h3v1h-3zM0 5h2v1h-2zM0 6h1v1h-1z" fill="#000"/></svg>
<div class="" style="left:239px;top:72px;width:1242px;height:889px;background:#fff;box-shadow:inset 1px 1px #848284,inset 2px 2px #424142,inset -1px -1px #fff,inset -2px -2px #d6d3ce;"></div>
<div class="hdr" style="left:241px;top:74px;width:161px;height:17px;"></div>
<span class="t" style="left:246.5px;top:77px;letter-spacing:-0.336px;">Name</span>
<div class="hdr" style="left:402px;top:74px;width:167px;height:17px;"></div>
<span class="t" style="left:407.5px;top:77px;letter-spacing:-0.027px;">Type</span>
<div class="hdr" style="left:569px;top:74px;width:283px;height:17px;"></div>
<span class="t" style="left:574.5px;top:77px;letter-spacing:-0.185px;">Description</span>
<div class="hdr" style="left:852px;top:74px;width:640px;height:17px;"></div>
<svg style="left:245px;top:91px" width="16" height="16" viewBox="0 0 16 16"><path d="M7 4.5V2.2L7.7 1.5H12.8L13.5 2.2V5Z" fill="#f6d88c" stroke="#dcb25e" stroke-width=".9"/>
<rect x="7.8" y="2.1" width="2.4" height="1.3" fill="#fff"/><rect x="10" y="2.1" width="2.2" height="1.3" rx=".5" fill="#4a98f0"/>
<path d="M.5 3Q.5 2.5 1 2.5H5.7L7.2 4.7H13.5V13.5H.5Z" fill="url(#gF)" stroke="#e2b968" stroke-width=".9"/>
<path d="M1.4 3.4H5.3L6.8 5.6V12.6H1.4Z" fill="#ffeeb0" opacity=".3"/>
<path d="M.5 13.5H13.5V5.2" fill="none" stroke="#c9a050" stroke-width=".9"/></svg>
<span class="t" style="left:262.5px;top:94px;letter-spacing:-0.281px;">Builtin</span>
<span class="t" style="left:407.5px;top:94px;letter-spacing:-0.281px;">builtinDomain</span>
<svg style="left:245px;top:108px" width="16" height="16" viewBox="0 0 16 16"><path d="M7 4.5V2.2L7.7 1.5H12.8L13.5 2.2V5Z" fill="#f6d88c" stroke="#dcb25e" stroke-width=".9"/>
<rect x="7.8" y="2.1" width="2.4" height="1.3" fill="#fff"/><rect x="10" y="2.1" width="2.2" height="1.3" rx=".5" fill="#4a98f0"/>
<path d="M.5 3Q.5 2.5 1 2.5H5.7L7.2 4.7H13.5V13.5H.5Z" fill="url(#gF)" stroke="#e2b968" stroke-width=".9"/>
<path d="M1.4 3.4H5.3L6.8 5.6V12.6H1.4Z" fill="#ffeeb0" opacity=".3"/>
<path d="M.5 13.5H13.5V5.2" fill="none" stroke="#c9a050" stroke-width=".9"/></svg>
<span class="t" style="left:262.5px;top:111px;letter-spacing:-0.229px;">Computers</span>
<span class="t" style="left:407.5px;top:111px;letter-spacing:-0.135px;">Container</span>
<span class="t" style="left:574.5px;top:111px;letter-spacing:-0.048px;">Default container for upgraded computer accounts</span>
<svg style="left:245px;top:125px" width="16" height="16" viewBox="0 0 16 16"><path d="M7 4.5V2.2L7.7 1.5H12.8L13.5 2.2V5Z" fill="#f6d88c" stroke="#dcb25e" stroke-width=".9"/>
<rect x="7.8" y="2.1" width="2.4" height="1.3" fill="#fff"/><rect x="10" y="2.1" width="2.2" height="1.3" rx=".5" fill="#4a98f0"/>
<path d="M.5 3Q.5 2.5 1 2.5H5.7L7.2 4.7H13.5V13.5H.5Z" fill="url(#gF)" stroke="#e2b968" stroke-width=".9"/>
<path d="M1.4 3.4H5.3L6.8 5.6V12.6H1.4Z" fill="#ffeeb0" opacity=".3"/>
<path d="M.5 13.5H13.5V5.2" fill="none" stroke="#c9a050" stroke-width=".9"/><rect x="3" y="6" width="5" height="6" fill="url(#gOU)"/>
<rect x="3" y="6" width="5" height=".8" fill="#a07a1c"/>
<path d="M4.2 9.6L5.6 8.2L6.4 9L5 10.4Z" fill="#fffbe0" opacity=".9"/></svg>
<span class="t" style="left:262.5px;top:128px;letter-spacing:-0.259px;">Domain Controllers</span>
<span class="t" style="left:407.5px;top:128px;letter-spacing:-0.163px;">Organizational Unit</span>
<span class="t" style="left:574.5px;top:128px;letter-spacing:-0.059px;">Default container for domain controllers</span>
<svg style="left:245px;top:142px" width="16" height="16" viewBox="0 0 16 16"><path d="M7 4.5V2.2L7.7 1.5H12.8L13.5 2.2V5Z" fill="#f6d88c" stroke="#dcb25e" stroke-width=".9"/>
<rect x="7.8" y="2.1" width="2.4" height="1.3" fill="#fff"/><rect x="10" y="2.1" width="2.2" height="1.3" rx=".5" fill="#4a98f0"/>
<path d="M.5 3Q.5 2.5 1 2.5H5.7L7.2 4.7H13.5V13.5H.5Z" fill="url(#gF)" stroke="#e2b968" stroke-width=".9"/>
<path d="M1.4 3.4H5.3L6.8 5.6V12.6H1.4Z" fill="#ffeeb0" opacity=".3"/>
<path d="M.5 13.5H13.5V5.2" fill="none" stroke="#c9a050" stroke-width=".9"/></svg>
<span class="t" style="left:262.5px;top:145px;letter-spacing:-0.234px;">ForeignSecurityPrincipals</span>
<span class="t" style="left:407.5px;top:145px;letter-spacing:-0.135px;">Container</span>
<span class="t" style="left:574.5px;top:145px;letter-spacing:-0.007px;">Default container for security identifiers (SIDs) associ...</span>
<svg style="left:245px;top:159px" width="16" height="16" viewBox="0 0 16 16"><path d="M1.5 .5H11L14.5 4V15.5H1.5Z" fill="#fff" stroke="#848284"/>
<path d="M11 .8V4H14.2" fill="#f0f0f0" stroke="#848284" stroke-width=".8"/>
<rect x="3.4" y="4.4" width="9" height="8" fill="#fffff0" stroke="#909090" stroke-width=".8"/>
<path d="M3.2 12.6H12.6V4.6" stroke="#000" stroke-width="1.1" fill="none"/>
<rect x="3.9" y="4.9" width="8.1" height="2" fill="#0000a0"/>
<rect x="4.8" y="5" width="1.3" height="1.3" fill="#f0c020"/>
<path d="M5.3 7.8H7V11H6.2L5 9.6Z" fill="#e00000"/><rect x="4.9" y="7.7" width="1.1" height="1.1" fill="#ffe000"/>
<circle cx="9.5" cy="8.8" r=".9" fill="#0000ff"/><circle cx="8.6" cy="9.9" r=".9" fill="#0000ff"/><circle cx="10.5" cy="9.9" r=".9" fill="#0000ff"/><rect x="9" y="9.4" width="1" height="1" fill="#00ffff"/><rect x="9" y="10.6" width="2" height=".9" fill="#008000"/></svg>
<span class="t" style="left:262.5px;top:162px;letter-spacing:0.225px;">Infrastructure</span>
<span class="t" style="left:407.5px;top:162px;letter-spacing:0.039px;">infrastructureUpdate</span>
<svg style="left:245px;top:176px" width="16" height="16" viewBox="0 0 16 16"><path d="M7 4.5V2.2L7.7 1.5H12.8L13.5 2.2V5Z" fill="#f6d88c" stroke="#dcb25e" stroke-width=".9"/>
<rect x="7.8" y="2.1" width="2.4" height="1.3" fill="#fff"/><rect x="10" y="2.1" width="2.2" height="1.3" rx=".5" fill="#4a98f0"/>
<path d="M.5 3Q.5 2.5 1 2.5H5.7L7.2 4.7H13.5V13.5H.5Z" fill="url(#gF)" stroke="#e2b968" stroke-width=".9"/>
<path d="M1.4 3.4H5.3L6.8 5.6V12.6H1.4Z" fill="#ffeeb0" opacity=".3"/>
<path d="M.5 13.5H13.5V5.2" fill="none" stroke="#c9a050" stroke-width=".9"/></svg>
<span class="t" style="left:262.5px;top:179px;letter-spacing:-0.219px;">LostAndFound</span>
<span class="t" style="left:407.5px;top:179px;letter-spacing:-0.203px;">lostAndFound</span>
<span class="t" style="left:574.5px;top:179px;letter-spacing:0.002px;">Default container for orphaned objects</span>
<svg style="left:245px;top:193px" width="16" height="16" viewBox="0 0 16 16"><path d="M7 4.5V2.2L7.7 1.5H12.8L13.5 2.2V5Z" fill="#f6d88c" stroke="#dcb25e" stroke-width=".9"/>
<rect x="7.8" y="2.1" width="2.4" height="1.3" fill="#fff"/><rect x="10" y="2.1" width="2.2" height="1.3" rx=".5" fill="#4a98f0"/>
<path d="M.5 3Q.5 2.5 1 2.5H5.7L7.2 4.7H13.5V13.5H.5Z" fill="url(#gF)" stroke="#e2b968" stroke-width=".9"/>
<path d="M1.4 3.4H5.3L6.8 5.6V12.6H1.4Z" fill="#ffeeb0" opacity=".3"/>
<path d="M.5 13.5H13.5V5.2" fill="none" stroke="#c9a050" stroke-width=".9"/></svg>
<span class="t" style="left:262.5px;top:196px;letter-spacing:-0.200px;">Managed Service Accounts</span>
<span class="t" style="left:407.5px;top:196px;letter-spacing:-0.135px;">Container</span>
<span class="t" style="left:574.5px;top:196px;letter-spacing:-0.073px;">Default container for managed service accounts</span>
<svg style="left:245px;top:210px" width="16" height="16" viewBox="0 0 16 16"><path d="M7 4.5V2.2L7.7 1.5H12.8L13.5 2.2V5Z" fill="#f6d88c" stroke="#dcb25e" stroke-width=".9"/>
<rect x="7.8" y="2.1" width="2.4" height="1.3" fill="#fff"/><rect x="10" y="2.1" width="2.2" height="1.3" rx=".5" fill="#4a98f0"/>
<path d="M.5 3Q.5 2.5 1 2.5H5.7L7.2 4.7H13.5V13.5H.5Z" fill="url(#gF)" stroke="#e2b968" stroke-width=".9"/>
<path d="M1.4 3.4H5.3L6.8 5.6V12.6H1.4Z" fill="#ffeeb0" opacity=".3"/>
<path d="M.5 13.5H13.5V5.2" fill="none" stroke="#c9a050" stroke-width=".9"/></svg>
<span class="t" style="left:262.5px;top:213px;letter-spacing:-0.432px;">NTDS Quotas</span>
<span class="t" style="left:407.5px;top:213px;letter-spacing:-0.253px;">msDS-QuotaContainer</span>
<span class="t" style="left:574.5px;top:213px;letter-spacing:-0.107px;">Quota specifications container</span>
<svg style="left:245px;top:227px" width="16" height="16" viewBox="0 0 16 16"><path d="M7 4.5V2.2L7.7 1.5H12.8L13.5 2.2V5Z" fill="#f6d88c" stroke="#dcb25e" stroke-width=".9"/>
<rect x="7.8" y="2.1" width="2.4" height="1.3" fill="#fff"/><rect x="10" y="2.1" width="2.2" height="1.3" rx=".5" fill="#4a98f0"/>
<path d="M.5 3Q.5 2.5 1 2.5H5.7L7.2 4.7H13.5V13.5H.5Z" fill="url(#gF)" stroke="#e2b968" stroke-width=".9"/>
<path d="M1.4 3.4H5.3L6.8 5.6V12.6H1.4Z" fill="#ffeeb0" opacity=".3"/>
<path d="M.5 13.5H13.5V5.2" fill="none" stroke="#c9a050" stroke-width=".9"/></svg>
<span class="t" style="left:262.5px;top:230px;letter-spacing:-0.250px;">Program Data</span>
<span class="t" style="left:407.5px;top:230px;letter-spacing:-0.135px;">Container</span>
<svg style="left:245px;top:244px" width="16" height="16" viewBox="0 0 16 16"><path d="M7 4.5V2.2L7.7 1.5H12.8L13.5 2.2V5Z" fill="#f6d88c" stroke="#dcb25e" stroke-width=".9"/>
<rect x="7.8" y="2.1" width="2.4" height="1.3" fill="#fff"/><rect x="10" y="2.1" width="2.2" height="1.3" rx=".5" fill="#4a98f0"/>
<path d="M.5 3Q.5 2.5 1 2.5H5.7L7.2 4.7H13.5V13.5H.5Z" fill="url(#gF)" stroke="#e2b968" stroke-width=".9"/>
<path d="M1.4 3.4H5.3L6.8 5.6V12.6H1.4Z" fill="#ffeeb0" opacity=".3"/>
<path d="M.5 13.5H13.5V5.2" fill="none" stroke="#c9a050" stroke-width=".9"/><rect x="3" y="6" width="5" height="6" fill="url(#gOU)"/>
<rect x="3" y="6" width="5" height=".8" fill="#a07a1c"/>
<path d="M4.2 9.6L5.6 8.2L6.4 9L5 10.4Z" fill="#fffbe0" opacity=".9"/></svg>
<span class="t" style="left:262.5px;top:247px;letter-spacing:-0.215px;">Security_Groups</span>
<span class="t" style="left:407.5px;top:247px;letter-spacing:-0.163px;">Organizational Unit</span>
<svg style="left:245px;top:261px" width="16" height="16" viewBox="0 0 16 16"><path d="M7 4.5V2.2L7.7 1.5H12.8L13.5 2.2V5Z" fill="#f6d88c" stroke="#dcb25e" stroke-width=".9"/>
<rect x="7.8" y="2.1" width="2.4" height="1.3" fill="#fff"/><rect x="10" y="2.1" width="2.2" height="1.3" rx=".5" fill="#4a98f0"/>
<path d="M.5 3Q.5 2.5 1 2.5H5.7L7.2 4.7H13.5V13.5H.5Z" fill="url(#gF)" stroke="#e2b968" stroke-width=".9"/>
<path d="M1.4 3.4H5.3L6.8 5.6V12.6H1.4Z" fill="#ffeeb0" opacity=".3"/>
<path d="M.5 13.5H13.5V5.2" fill="none" stroke="#c9a050" stroke-width=".9"/><rect x="3" y="6" width="5" height="6" fill="url(#gOU)"/>
<rect x="3" y="6" width="5" height=".8" fill="#a07a1c"/>
<path d="M4.2 9.6L5.6 8.2L6.4 9L5 10.4Z" fill="#fffbe0" opacity=".9"/></svg>
<span class="t" style="left:262.5px;top:264px;letter-spacing:-0.165px;">Servers</span>
<span class="t" style="left:407.5px;top:264px;letter-spacing:-0.163px;">Organizational Unit</span>
<svg style="left:245px;top:278px" width="16" height="16" viewBox="0 0 16 16"><path d="M7 4.5V2.2L7.7 1.5H12.8L13.5 2.2V5Z" fill="#f6d88c" stroke="#dcb25e" stroke-width=".9"/>
<rect x="7.8" y="2.1" width="2.4" height="1.3" fill="#fff"/><rect x="10" y="2.1" width="2.2" height="1.3" rx=".5" fill="#4a98f0"/>
<path d="M.5 3Q.5 2.5 1 2.5H5.7L7.2 4.7H13.5V13.5H.5Z" fill="url(#gF)" stroke="#e2b968" stroke-width=".9"/>
<path d="M1.4 3.4H5.3L6.8 5.6V12.6H1.4Z" fill="#ffeeb0" opacity=".3"/>
<path d="M.5 13.5H13.5V5.2" fill="none" stroke="#c9a050" stroke-width=".9"/><rect x="3" y="6" width="5" height="6" fill="url(#gOU)"/>
<rect x="3" y="6" width="5" height=".8" fill="#a07a1c"/>
<path d="M4.2 9.6L5.6 8.2L6.4 9L5 10.4Z" fill="#fffbe0" opacity=".9"/></svg>
<span class="t" style="left:262.5px;top:281px;letter-spacing:-0.193px;">Service_Accounts</span>
<span class="t" style="left:407.5px;top:281px;letter-spacing:-0.163px;">Organizational Unit</span>
<svg style="left:245px;top:295px" width="16" height="16" viewBox="0 0 16 16"><path d="M7 4.5V2.2L7.7 1.5H12.8L13.5 2.2V5Z" fill="#f6d88c" stroke="#dcb25e" stroke-width=".9"/>
<rect x="7.8" y="2.1" width="2.4" height="1.3" fill="#fff"/><rect x="10" y="2.1" width="2.2" height="1.3" rx=".5" fill="#4a98f0"/>
<path d="M.5 3Q.5 2.5 1 2.5H5.7L7.2 4.7H13.5V13.5H.5Z" fill="url(#gF)" stroke="#e2b968" stroke-width=".9"/>
<path d="M1.4 3.4H5.3L6.8 5.6V12.6H1.4Z" fill="#ffeeb0" opacity=".3"/>
<path d="M.5 13.5H13.5V5.2" fill="none" stroke="#c9a050" stroke-width=".9"/></svg>
<span class="t" style="left:262.5px;top:298px;letter-spacing:-0.348px;">System</span>
<span class="t" style="left:407.5px;top:298px;letter-spacing:-0.135px;">Container</span>
<svg style="left:245px;top:312px" width="16" height="16" viewBox="0 0 16 16"><path d="M7 4.5V2.2L7.7 1.5H12.8L13.5 2.2V5Z" fill="#f6d88c" stroke="#dcb25e" stroke-width=".9"/>
<rect x="7.8" y="2.1" width="2.4" height="1.3" fill="#fff"/><rect x="10" y="2.1" width="2.2" height="1.3" rx=".5" fill="#4a98f0"/>
<path d="M.5 3Q.5 2.5 1 2.5H5.7L7.2 4.7H13.5V13.5H.5Z" fill="url(#gF)" stroke="#e2b968" stroke-width=".9"/>
<path d="M1.4 3.4H5.3L6.8 5.6V12.6H1.4Z" fill="#ffeeb0" opacity=".3"/>
<path d="M.5 13.5H13.5V5.2" fill="none" stroke="#c9a050" stroke-width=".9"/></svg>
<span class="t" style="left:262.5px;top:315px;letter-spacing:-0.344px;">Users</span>
<span class="t" style="left:407.5px;top:315px;letter-spacing:-0.135px;">Container</span>
<svg style="left:245px;top:329px" width="16" height="16" viewBox="0 0 16 16"><path d="M7 4.5V2.2L7.7 1.5H12.8L13.5 2.2V5Z" fill="#f6d88c" stroke="#dcb25e" stroke-width=".9"/>
<rect x="7.8" y="2.1" width="2.4" height="1.3" fill="#fff"/><rect x="10" y="2.1" width="2.2" height="1.3" rx=".5" fill="#4a98f0"/>
<path d="M.5 3Q.5 2.5 1 2.5H5.7L7.2 4.7H13.5V13.5H.5Z" fill="url(#gF)" stroke="#e2b968" stroke-width=".9"/>
<path d="M1.4 3.4H5.3L6.8 5.6V12.6H1.4Z" fill="#ffeeb0" opacity=".3"/>
<path d="M.5 13.5H13.5V5.2" fill="none" stroke="#c9a050" stroke-width=".9"/><rect x="3" y="6" width="5" height="6" fill="url(#gOU)"/>
<rect x="3" y="6" width="5" height=".8" fill="#a07a1c"/>
<path d="M4.2 9.6L5.6 8.2L6.4 9L5 10.4Z" fill="#fffbe0" opacity=".9"/></svg>
<span class="t" style="left:262.5px;top:332px;letter-spacing:0.066px;">View Infrastructure</span>
<span class="t" style="left:407.5px;top:332px;letter-spacing:-0.163px;">Organizational Unit</span>
<div class="" style="left:1px;top:963px;width:1260px;height:18px;box-shadow:inset 1px 1px #848284,inset -1px -1px #fff"></div>
<div class="" style="left:1263px;top:963px;width:131px;height:18px;box-shadow:inset 1px 1px #848284,inset -1px -1px #fff"></div>
<div class="" style="left:1396px;top:963px;width:83px;height:18px;box-shadow:inset 1px 1px #848284,inset -1px -1px #fff"></div>
<div class="win" style="left:466px;top:224px;width:626px;height:469px;"></div>
<div class="" style="left:469px;top:227px;width:620px;height:18px;background:#848284"></div>
<svg style="left:472px;top:228px" width="16" height="16" viewBox="0 0 16 16"><defs><linearGradient id="gD1" x1="0" y1="0" x2="1" y2="0"><stop offset="0" stop-color="#fff29a"/><stop offset=".5" stop-color="#fff8b8"/><stop offset="1" stop-color="#f6dc78"/></linearGradient>
<linearGradient id="gD2" x1="0" y1="0" x2="1" y2="1"><stop offset="0" stop-color="#f8ea98"/><stop offset="1" stop-color="#e6c43c"/></linearGradient></defs>
<path d="M3 1.1H8.6L9 1.6V7.7H10.2V14.3H3Z" fill="url(#gD2)"/>
<path d="M0 -.3L3.4 2.1V15.2L0 12.8Z" fill="url(#gD1)"/>
<path d="M3.4 9V14.6L4 14.3V9.5Z" fill="#c8a030" opacity=".7"/></svg>
<span class="t b" style="left:489px;top:230px;letter-spacing:0.353px;color:#d6d3ce;">Advanced Security Settings for vmfocus</span>
<div class="raised" style="left:1071px;top:229px;width:16px;height:14px;"></div>
<svg style="left:1075px;top:232px" width="8" height="7" viewBox="0 0 8 7" shape-rendering="crispEdges"><path d="M0 0h2v1h-2zM6 0h2v1h-2zM1 1h2v1h-2zM5 1h2v1h-2zM2 2h4v1h-4zM3 3h2v1h-2zM2 4h4v1h-4zM1 5h2v1h-2zM5 5h2v1h-2zM0 6h2v1h-2zM6 6h2v1h-2z" fill="#000"/></svg>
<div class="tab" style="left:546px;top:255px;width:48px;height:19px;"></div>
<span class="t ms" style="left:549.7px;top:258px;transform:scaleX(0.8718);">Auditing</span>
<div class="tab" style="left:595px;top:255px;width:42px;height:19px;"></div>
<span class="t ms" style="left:600px;top:258px;transform:scaleX(0.8912);">Owner</span>
<div class="tab" style="left:638px;top:255px;width:111px;height:19px;"></div>
<span class="t ms" style="left:643.5px;top:258px;transform:scaleX(0.8736);">Effective Permissions</span>
<div class="tabpage" style="left:475px;top:273px;width:609px;height:381px;"></div>
<div class="tab" style="left:475px;top:253px;width:71px;height:21px;"></div>
<div class="" style="left:476px;top:273px;width:68px;height:2px;background:#d6d3ce"></div>
<span class="t ms" style="left:482.7px;top:256px;transform:scaleX(0.8384);">Permissions</span>
<span class="t ms" style="left:491px;top:286.4px;font-size:11.5px;transform:scaleX(0.9226)">To view or edit details for a permission entry, select the entry and then click Edit.</span>
<span class="t ms" style="left:491px;top:322px;">Permission entries:</span>
<div class="sunken" style="left:490px;top:341px;width:579px;height:220px;"></div>
<div class="chk" style="left:1051px;top:343px;width:16px;height:216px;"></div>
<div class="hdr" style="left:492px;top:343px;width:60px;height:17px;"></div>
<span class="t ms" style="left:498px;top:345px;">Type</span>
<div class="hdr" style="left:552px;top:343px;width:150px;height:17px;"></div>
<span class="t ms" style="left:558px;top:345px;">Name</span>
<div class="hdr" style="left:702px;top:343px;width:100px;height:17px;"></div>
<span class="t ms" style="left:708px;top:345px;">Permission</span>
<div class="hdr" style="left:802px;top:343px;width:106px;height:17px;"></div>
<span class="t ms" style="left:802px;top:345px;">Inherited From</span>
<div class="hdr" style="left:908px;top:343px;width:143px;height:17px;"></div>
<span class="t ms" style="left:914px;top:345px;">Apply To</span>
<div class="raised" style="left:1051px;top:343px;width:16px;height:16px;"></div>
<svg style="left:1055px;top:349px" width="7" height="4" viewBox="0 0 7 4" shape-rendering="crispEdges"><path d="M3 0h1v1h-1zM2 1h3v1h-3zM1 2h5v1h-5zM0 3h7v1h-7z" fill="#000"/></svg>
<div class="raised" style="left:1051px;top:485px;width:16px;height:58px;"></div>
<div class="raised" style="left:1051px;top:543px;width:16px;height:16px;"></div>
<svg style="left:1055px;top:549px" width="7" height="4" viewBox="0 0 7 4" shape-rendering="crispEdges"><path d="M0 0h7v1h-7zM1 1h5v1h-5zM2 2h3v1h-3zM3 3h1v1h-1z" fill="#000"/></svg>
<span class="t ms" style="left:914.5px;top:362px;transform:scaleX(0.8793);">Descendant Computer ob...</span>
<span class="t ms" style="left:808px;top:362px;transform:scaleX(0.7994);">&lt;not inherited&gt;</span>
<span class="t ms" style="left:914.5px;top:379px;transform:scaleX(0.8941);">Descendant Group objects</span>
<span class="t ms" style="left:808px;top:379px;transform:scaleX(0.7994);">&lt;not inherited&gt;</span>
<span class="t ms" style="left:914.5px;top:396px;transform:scaleX(0.8952);">Descendant User objects</span>
<span class="t ms" style="left:808px;top:396px;transform:scaleX(0.7994);">&lt;not inherited&gt;</span>
<span class="t ms" style="left:914.5px;top:413px;transform:scaleX(0.8853);">This object only</span>
<span class="t ms" style="left:808px;top:413px;transform:scaleX(0.7994);">&lt;not inherited&gt;</span>
<span class="t ms" style="left:914.5px;top:430px;transform:scaleX(0.8853);">This object only</span>
<span class="t ms" style="left:808px;top:430px;transform:scaleX(0.7994);">&lt;not inherited&gt;</span>
<span class="t ms" style="left:914.5px;top:447px;transform:scaleX(0.8853);">This object only</span>
<span class="t ms" style="left:808px;top:447px;transform:scaleX(0.7994);">&lt;not inherited&gt;</span>
<span class="t ms" style="left:914.5px;top:464px;transform:scaleX(0.8853);">This object only</span>
<span class="t ms" style="left:808px;top:464px;transform:scaleX(0.7994);">&lt;not inherited&gt;</span>
<span class="t ms" style="left:914.5px;top:481px;transform:scaleX(0.8853);">This object only</span>
<span class="t ms" style="left:808px;top:481px;transform:scaleX(0.7994);">&lt;not inherited&gt;</span>
<span class="t ms" style="left:914.5px;top:498px;transform:scaleX(0.8853);">This object only</span>
<span class="t ms" style="left:808px;top:498px;transform:scaleX(0.7994);">&lt;not inherited&gt;</span>
<span class="t ms" style="left:914.5px;top:515px;transform:scaleX(0.8853);">This object only</span>
<span class="t ms" style="left:808px;top:515px;transform:scaleX(0.7994);">&lt;not inherited&gt;</span>
<div class="" style="left:492px;top:530px;width:559px;height:17px;background:#d6d3ce"></div>
<span class="t ms" style="left:914.5px;top:532px;transform:scaleX(0.8871);">This object and all desce...</span>
<span class="t ms" style="left:808px;top:532px;transform:scaleX(0.7994);">&lt;not inherited&gt;</span>
<div class="raised" style="left:490px;top:573px;width:75px;height:23px;"></div>
<span class="t ms" style="left:490px;top:577px;width:75px;text-align:center;transform-origin:50% 0">Add...</span>
<div class="raised" style="left:571px;top:573px;width:75px;height:23px;"></div>
<span class="t ms" style="left:571px;top:577px;width:75px;text-align:center;transform-origin:50% 0">Edit...</span>
<div class="raised" style="left:652px;top:573px;width:75px;height:23px;"></div>
<span class="t ms" style="left:652px;top:577px;width:75px;text-align:center;transform-origin:50% 0">Remove</span>
<div class="raised" style="left:938px;top:573px;width:131px;height:23px;"></div>
<span class="t ms" style="left:938px;top:577px;width:131px;text-align:center;transform-origin:50% 0">Restore defaults</span>
<div class="sunken" style="left:500px;top:607px;width:13px;height:13px;"></div>
<span class="t ms" style="left:518px;top:607px;">Include inheritable permissions from this object's parent</span>
<span class="t ms" style="left:490px;top:625.3px;color:#000080;text-decoration:underline;">Managing permission entries</span>
<div class="raised" style="left:846px;top:660px;width:75px;height:23px;"></div>
<span class="t ms" style="left:846px;top:664px;width:75px;text-align:center;transform-origin:50% 0">OK</span>
<div class="raised" style="left:927px;top:660px;width:75px;height:23px;"></div>
<span class="t ms" style="left:927px;top:664px;width:75px;text-align:center;transform-origin:50% 0">Cancel</span>
<div class="raised" style="left:1008px;top:660px;width:75px;height:23px;"></div>
<span class="t ms" style="left:1008px;top:664px;width:75px;text-align:center;transform-origin:50% 0">Apply</span>
<div class="win" style="left:495px;top:291px;width:367px;height:468px;"></div>
<div class="" style="left:498px;top:294px;width:361px;height:18px;background:#08246b"></div>
<svg style="left:501px;top:295px" width="16" height="16" viewBox="0 0 16 16"><defs><linearGradient id="gD1" x1="0" y1="0" x2="1" y2="0"><stop offset="0" stop-color="#fff29a"/><stop offset=".5" stop-color="#fff8b8"/><stop offset="1" stop-color="#f6dc78"/></linearGradient>
<linearGradient id="gD2" x1="0" y1="0" x2="1" y2="1"><stop offset="0" stop-color="#f8ea98"/><stop offset="1" stop-color="#e6c43c"/></linearGradient></defs>
<path d="M3 1.1H8.6L9 1.6V7.7H10.2V14.3H3Z" fill="url(#gD2)"/>
<path d="M0 -.3L3.4 2.1V15.2L0 12.8Z" fill="url(#gD1)"/>
<path d="M3.4 9V14.6L4 14.3V9.5Z" fill="#c8a030" opacity=".7"/></svg>
<span class="t b" style="left:518px;top:297px;letter-spacing:0.283px;color:#fff;">Permission Entry for vmfocus</span>
<div class="raised" style="left:841px;top:296px;width:16px;height:14px;"></div>
<svg style="left:845px;top:299px" width="8" height="7" viewBox="0 0 8 7" shape-rendering="crispEdges"><path d="M0 0h2v1h-2zM6 0h2v1h-2zM1 1h2v1h-2zM5 1h2v1h-2zM2 2h4v1h-4zM3 3h2v1h-2zM2 4h4v1h-4zM1 5h2v1h-2zM5 5h2v1h-2zM0 6h2v1h-2zM6 6h2v1h-2z" fill="#000"/></svg>
<div class="tab" style="left:506px;top:322px;width:45px;height:19px;"></div>
<span class="t" style="left:511.5px;top:326px;letter-spacing:-0.052px;">Object</span>
<div class="tabpage" style="left:504px;top:340px;width:349px;height:380px;"></div>
<div class="tab" style="left:549px;top:320px;width:64px;height:21px;"></div>
<div class="" style="left:550px;top:340px;width:61px;height:2px;background:#d6d3ce"></div>
<span class="t" style="left:555.5px;top:324px;letter-spacing:-0.116px;">Properties</span>
<span class="t" style="left:519.5px;top:364px;letter-spacing:-0.481px;"><span class="u" style="position:static">N</span>ame:</span>
<div class="sunken" style="left:561px;top:360px;width:195px;height:20px;background:#d6d3ce"></div>
<div style="left:568px;top:362px;width:186px;height:16px;overflow:hidden"><span class="t" style="right:4px;top:2px;letter-spacing:-0.12px">vmfocus\service.viewcomposer@vmfocus.local)</span></div>
<div class="raised" style="left:763px;top:358px;width:75px;height:23px;"></div>
<span class="t" style="left:762.2px;top:362.5px;width:75px;text-align:center;letter-spacing:-0.111px"><span class="u" style="position:static">C</span>hange...</span>
<span class="t" style="left:519px;top:396px;letter-spacing:-0.038px;">Apply t<span class="u" style="position:static">o</span>:</span>
<div class="sunken" style="left:579px;top:391px;width:260px;height:21px;"></div>
<span class="t" style="left:583px;top:396px;letter-spacing:-0.109px;">This object and all descendant objects</span>
<div class="raised" style="left:821px;top:393px;width:16px;height:17px;"></div>
<svg style="left:825px;top:399px" width="7" height="4" viewBox="0 0 7 4" shape-rendering="crispEdges"><path d="M0 0h7v1h-7zM1 1h5v1h-5zM2 2h3v1h-3zM3 3h1v1h-1z" fill="#000"/></svg>
<span class="t" style="left:519px;top:423px;letter-spacing:-0.414px;"><span class="u" style="position:static">P</span>ermissions:</span>
<span class="t" style="left:722.5px;top:423px;letter-spacing:-0.256px;">Allow</span>
<span class="t" style="left:782.5px;top:423px;letter-spacing:-0.172px;">Deny</span>
<div class="" style="left:519px;top:438px;width:320px;height:208px;background:#fff;border:1px solid #000"></div>
<div style="left:520px;top:439px;width:302px;height:206px;overflow:hidden">
<span class="t" style="left:10.7px;top:6px;letter-spacing:-0.162px;">Read all properties</span>
<div class="cb" style="left:210px;top:5px;width:13px;height:13px;"></div>
<div class="cb" style="left:270px;top:5px;width:13px;height:13px;"></div>
<span class="t" style="left:10.7px;top:24px;letter-spacing:-0.036px;">Write all properties</span>
<div class="cb" style="left:210px;top:23px;width:13px;height:13px;"></div>
<div class="cb" style="left:270px;top:23px;width:13px;height:13px;"></div>
<svg style="left:210px;top:23px" width="13" height="13" viewBox="0 0 13 13"><path d="M3 5v3l2 2l5-5v-3l-5 5z" fill="#000" shape-rendering="crispEdges"/></svg>
<span class="t" style="left:10.7px;top:42px;letter-spacing:-0.124px;">Read domain password &amp; lockout pol...</span>
<div class="cb" style="left:210px;top:41px;width:13px;height:13px;"></div>
<div class="cb" style="left:270px;top:41px;width:13px;height:13px;"></div>
<span class="t" style="left:10.7px;top:60px;letter-spacing:-0.085px;">Write domain password &amp; lockout pol...</span>
<div class="cb" style="left:210px;top:59px;width:13px;height:13px;"></div>
<div class="cb" style="left:270px;top:59px;width:13px;height:13px;"></div>
<svg style="left:210px;top:59px" width="13" height="13" viewBox="0 0 13 13"><path d="M3 5v3l2 2l5-5v-3l-5 5z" fill="#000" shape-rendering="crispEdges"/></svg>
<span class="t" style="left:10.7px;top:78px;letter-spacing:-0.008px;">Read Other domain parameters (for ...</span>
<div class="cb" style="left:210px;top:77px;width:13px;height:13px;"></div>
<div class="cb" style="left:270px;top:77px;width:13px;height:13px;"></div>
<span class="t" style="left:10.7px;top:96px;letter-spacing:0.028px;">Write Other domain parameters (for ...</span>
<div class="cb" style="left:210px;top:95px;width:13px;height:13px;"></div>
<div class="cb" style="left:270px;top:95px;width:13px;height:13px;"></div>
<svg style="left:210px;top:95px" width="13" height="13" viewBox="0 0 13 13"><path d="M3 5v3l2 2l5-5v-3l-5 5z" fill="#000" shape-rendering="crispEdges"/></svg>
<span class="t" style="left:10.7px;top:114px;letter-spacing:-0.225px;">Read Description</span>
<div class="cb" style="left:210px;top:113px;width:13px;height:13px;"></div>
<div class="cb" style="left:270px;top:113px;width:13px;height:13px;"></div>
<span class="t" style="left:10.7px;top:132px;letter-spacing:-0.103px;">Write Description</span>
<div class="cb" style="left:210px;top:131px;width:13px;height:13px;"></div>
<div class="cb" style="left:270px;top:131px;width:13px;height:13px;"></div>
<svg style="left:210px;top:131px" width="13" height="13" viewBox="0 0 13 13"><path d="M3 5v3l2 2l5-5v-3l-5 5z" fill="#000" shape-rendering="crispEdges"/></svg>
<span class="t" style="left:10.7px;top:150px;letter-spacing:-0.233px;">Read flags</span>
<div class="cb" style="left:210px;top:149px;width:13px;height:13px;"></div>
<div class="cb" style="left:270px;top:149px;width:13px;height:13px;"></div>
<span class="t" style="left:10.7px;top:168px;letter-spacing:0.003px;">Write flags</span>
<div class="cb" style="left:210px;top:167px;width:13px;height:13px;"></div>
<div class="cb" style="left:270px;top:167px;width:13px;height:13px;"></div>
<svg style="left:210px;top:167px" width="13" height="13" viewBox="0 0 13 13"><path d="M3 5v3l2 2l5-5v-3l-5 5z" fill="#000" shape-rendering="crispEdges"/></svg>
<span class="t" style="left:10.7px;top:186px;letter-spacing:-0.430px;">Read gPLink</span>
<div class="cb" style="left:210px;top:185px;width:13px;height:13px;"></div>
<div class="cb" style="left:270px;top:185px;width:13px;height:13px;"></div>
<span class="t" style="left:10.7px;top:204px;letter-spacing:-0.239px;">Write gPLink</span>
<div class="cb" style="left:210px;top:203px;width:13px;height:13px;"></div>
<div class="cb" style="left:270px;top:203px;width:13px;height:13px;"></div>
<svg style="left:210px;top:203px" width="13" height="13" viewBox="0 0 13 13"><path d="M3 5v3l2 2l5-5v-3l-5 5z" fill="#000" shape-rendering="crispEdges"/></svg>
</div>
<div class="chk" style="left:822px;top:439px;width:16px;height:206px;"></div>
<div class="raised" style="left:822px;top:439px;width:16px;height:16px;"></div>
<svg style="left:826px;top:445px" width="7" height="4" viewBox="0 0 7 4" shape-rendering="crispEdges"><path d="M3 0h1v1h-1zM2 1h3v1h-3zM1 2h5v1h-5zM0 3h7v1h-7z" fill="#000"/></svg>
<div class="raised" style="left:822px;top:455px;width:16px;height:20px;"></div>
<div class="raised" style="left:822px;top:629px;width:16px;height:16px;"></div>
<svg style="left:826px;top:635px" width="7" height="4" viewBox="0 0 7 4" shape-rendering="crispEdges"><path d="M0 0h7v1h-7zM1 1h5v1h-5zM2 2h3v1h-3zM3 3h1v1h-1z" fill="#000"/></svg>
<div class="" style="left:728px;top:462px;width:1px;height:13px;border-left:1px dotted #000"></div>
<div class="" style="left:524px;top:460px;width:222px;height:17px;border:3px solid #ed1c24"></div>
<div class="sunken" style="left:519px;top:662px;width:13px;height:13px;"></div>
<span class="t" style="left:537px;top:656px;letter-spacing:-0.079px;">Apply <span class="u" style="position:static">t</span>hese permissions to objects and/or</span>
<span class="t" style="left:537px;top:669px;letter-spacing:-0.061px;">containers within this container only</span>
<div class="raised" style="left:763px;top:651px;width:75px;height:23px;"></div>
<span class="t" style="left:762.2px;top:655.5px;width:75px;text-align:center;letter-spacing:-0.222px">C<span class="u" style="position:static">l</span>ear All</span>
<span class="t" style="left:519px;top:699px;letter-spacing:-0.305px;color:#000080;text-decoration:underline;">Managing permissions</span>
<div class="raised" style="left:697px;top:726px;width:75px;height:23px;"></div>
<span class="t" style="left:696.2px;top:730.5px;width:75px;text-align:center;letter-spacing:-1.000px">OK</span>
<div class="" style="left:696px;top:725px;width:77px;height:23px;border:3px solid #ed1c24"></div>
<div class="raised" style="left:778px;top:726px;width:75px;height:23px;"></div>
<span class="t" style="left:777.2px;top:730.5px;width:75px;text-align:center;letter-spacing:-0.167px">Cancel</span>
</div></body></html>
